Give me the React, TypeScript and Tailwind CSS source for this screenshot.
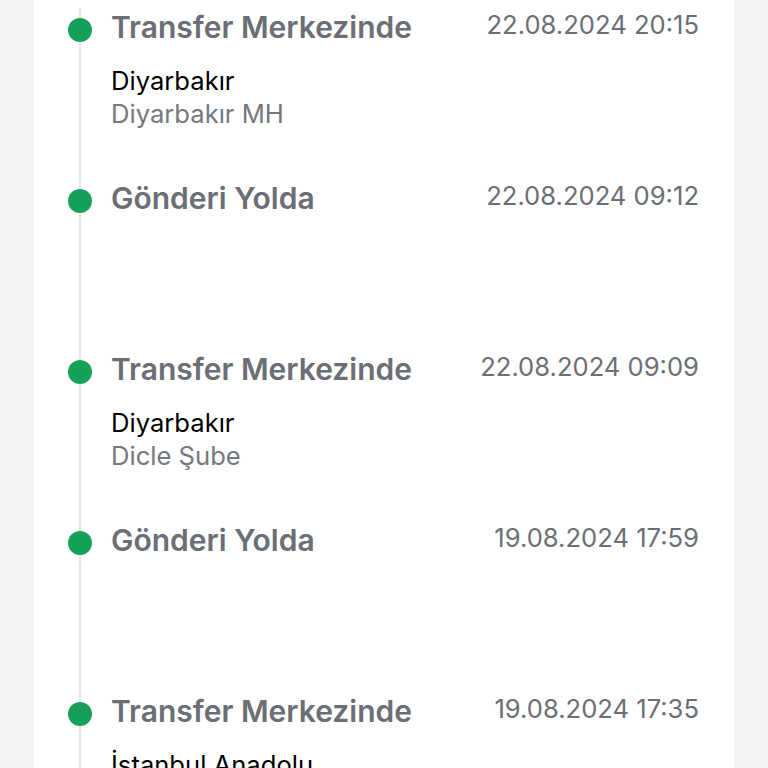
import React from 'react'

type Step = {
  title: string
  date: string
  city?: string
  branch?: string
}

const steps: Step[] = [
  { title: 'Transfer Merkezinde', date: '22.08.2024 20:15', city: 'Diyarbakır', branch: 'Diyarbakır MH' },
  { title: 'Gönderi Yolda', date: '22.08.2024 09:12' },
  { title: 'Transfer Merkezinde', date: '22.08.2024 09:09', city: 'Diyarbakır', branch: 'Dicle Şube' },
  { title: 'Gönderi Yolda', date: '19.08.2024 17:59' },
  { title: 'Transfer Merkezinde', date: '19.08.2024 17:35', city: 'İstanbul Anadolu', branch: 'Tuzla Şube' },
]

export default function App() {
  return (
    <div
      className="h-[768px] overflow-hidden bg-[#f3f4f6]"
      style={{ fontFamily: 'Inter, "Noto Sans", sans-serif' }}
    >
      <div className="mx-[34px] h-full bg-white pt-[9px] pr-[35px]">
        <ul className="ml-[45px] border-l-2 border-[#e5e7eb]">
          {steps.map((step, i) => (
            <li key={i} className="relative h-[171px] pl-[30px]">
              <span className="absolute -left-[13px] top-[9px] h-[24px] w-[24px] rounded-full bg-[#16a058]" />
              <div className="flex items-start justify-between">
                <h3 className="text-[30px] font-semibold leading-[36px] text-[#6b6e74]">
                  {step.title}
                </h3>
                <span className="text-[25.6px] leading-[32px] text-[#6b6e74]">
                  {step.date}
                </span>
              </div>
              {step.city && (
                <div className="mt-[19px] text-[25.6px] leading-[33px]">
                  <p className="text-black">{step.city}</p>
                  <p className="text-[#75787e]">{step.branch}</p>
                </div>
              )}
            </li>
          ))}
        </ul>
      </div>
    </div>
  )
}
